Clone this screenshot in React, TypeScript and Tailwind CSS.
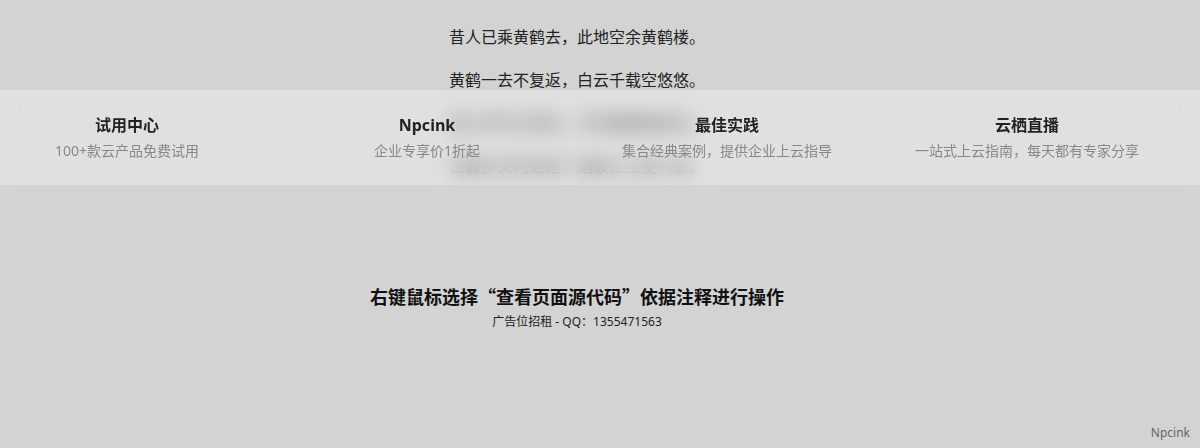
const poem = [
  '昔人已乘黄鹤去，此地空余黄鹤楼。',
  '黄鹤一去不复返，白云千载空悠悠。',
  '晴川历历汉阳树，芳草萋萋鹦鹉洲。',
  '日暮乡关何处是？烟波江上使人愁。',
];

const items = [
  { title: '试用中心', desc: '100+款云产品免费试用' },
  { title: 'Npcink', desc: '企业专享价1折起' },
  { title: '最佳实践', desc: '集合经典案例，提供企业上云指导' },
  { title: '云栖直播', desc: '一站式上云指南，每天都有专家分享' },
];

export default function App() {
  return (
    <div
      className="relative h-[448px] w-full overflow-hidden bg-[#d3d3d3] flex flex-col"
      style={{ fontFamily: '"Noto Sans", "Noto Sans CJK SC", sans-serif' }}
    >
      <div className="w-[1154px] flex flex-col items-center">
        {/* poem */}
        <div className="pt-[24px] flex flex-col gap-[16px] text-[16px] leading-[27px] text-[#222] text-center">
          {poem.map((line) => (
            <p key={line}>{line}</p>
          ))}
        </div>

        <h2 className="mt-[104px] text-[18px] leading-[24px] font-bold text-[#111] font-['Noto_Sans_CJK_SC',sans-serif]">
          右键鼠标选择“查看页面源代码”依据注释进行操作
        </h2>
        <p className="mt-[5px] text-[12px] leading-[18px] text-[#222]">广告位招租 - QQ：1355471563</p>
      </div>

      {/* frosted bar over the poem */}
      <div className="absolute left-0 right-0 top-[90px] h-[95px] bg-white/30 backdrop-blur-[10px] grid grid-cols-4">
        {items.map((it) => (
          <div key={it.title} className="pr-[46px] flex flex-col items-center pt-[24px]">
            <div className="text-[16px] leading-[22px] font-bold text-[#222]">{it.title}</div>
            <div className="mt-[6px] text-[14px] leading-[18px] text-[#888]">{it.desc}</div>
          </div>
        ))}
      </div>

      <div className="mt-auto pr-[10px] pb-[8px] text-right text-[12px] leading-[14px] text-[#666]">Npcink</div>
    </div>
  );
}
